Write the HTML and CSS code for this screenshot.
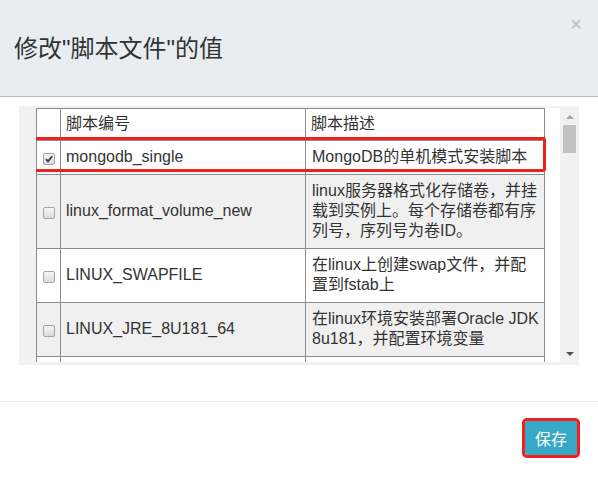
FILE: index.html
```html
<!DOCTYPE html>
<html lang="zh-CN">
<head>
<meta charset="utf-8">
<title>修改"脚本文件"的值</title>
<link rel="stylesheet" href="styles.css">
</head>
<body>
<div class="modal">
  <div class="modal-header">
    <h4 class="modal-title">修改"脚本文件"的值</h4>
    <span class="close">×</span>
  </div>
  <div class="modal-body">
    <div class="scrollbox">
      <div class="viewport">
        <div class="sheet">
          <table class="grid">
            <colgroup><col class="c-check"><col class="c-code"><col class="c-desc"></colgroup>
            <thead>
              <tr><th></th><th>脚本编号</th><th>脚本描述</th></tr>
            </thead>
            <tbody>
              <tr>
                <td class="chk"><span class="cb checked"><svg viewBox="0 0 12 12" width="12" height="12"><path d="M3 6.2 L5 8.4 L9.2 3.2" fill="none" stroke="#3a3a3a" stroke-width="1.8"/></svg></span></td>
                <td>mongodb_single</td>
                <td class="desc">MongoDB的单机模式安装脚本</td>
              </tr>
              <tr class="alt">
                <td class="chk"><span class="cb"></span></td>
                <td>linux_format_volume_new</td>
                <td class="desc">linux服务器格式化存储卷，并挂<br>载到实例上。每个存储卷都有序<br>列号，序列号为卷ID。</td>
              </tr>
              <tr>
                <td class="chk"><span class="cb"></span></td>
                <td>LINUX_SWAPFILE</td>
                <td class="desc">在linux上创建swap文件，并配<br>置到fstab上</td>
              </tr>
              <tr class="alt">
                <td class="chk"><span class="cb"></span></td>
                <td>LINUX_JRE_8U181_64</td>
                <td class="desc">在linux环境安装部署Oracle JDK<br>8u181，并配置环境变量</td>
              </tr>
              <tr>
                <td class="chk"></td>
                <td></td>
                <td class="desc">linux服务器格式化数据盘，并挂</td>
              </tr>
            </tbody>
          </table>
          <div class="mark"></div>
        </div>
      </div>
      <div class="scrollbar">
        <span class="arrow up"></span>
        <span class="thumb"></span>
        <span class="track"></span>
        <span class="arrow down"></span>
      </div>
    </div>
  </div>
  <div class="modal-footer">
    <button class="btn-save" type="button">保存</button>
  </div>
</div>
</body>
</html>
```
FILE: styles.css
```css
* { box-sizing: border-box; }
html, body {
  margin: 0;
  padding: 0;
  background: #ffffff;
}
body {
  font-family: "Liberation Sans", "Noto Sans CJK SC", sans-serif;
  color: #333333;
  width: 598px;
  height: 478px;
  overflow: hidden;
}
.modal-header {
  height: 97px;
  background: #e9edf1;
  border-bottom: 1px solid #b5babf;
  display: flex;
  justify-content: space-between;
  align-items: flex-start;
  padding: 0 16px 0 14px;
}
.modal-title {
  margin: 0;
  padding-top: 34px;
  font-size: 24px;
  line-height: 30px;
  font-weight: normal;
  color: #333333;
}
.close {
  margin-top: 14px;
  font-size: 20px;
  line-height: 20px;
  color: #b9bcbf;
}
.modal-body {
  padding: 9px 19px 0 19px;
}
.scrollbox {
  height: 259px;
  background: #f1f1f1;
  display: flex;
}
.viewport {
  flex: 1;
  padding: 2px 0 3px 17px;
  overflow: hidden;
}
.sheet {
  position: relative;
  height: 100%;
  background: #ffffff;
  overflow: hidden;
}
.grid {
  border-collapse: collapse;
  table-layout: fixed;
  width: 508px;
  font-size: 16px;
  line-height: 20px;
  color: #333333;
}
.c-check { width: 24px; }
.c-code { width: 245px; }
.c-desc { width: 239px; }
.grid th, .grid td {
  border: 1px solid #8c8c8c;
  padding: 6px 4px 7px 5px;
  text-align: left;
  vertical-align: middle;
  font-weight: normal;
}
.grid th { padding-top: 5px; padding-bottom: 6px; }
.grid td.desc { padding-left: 6px; white-space: nowrap; }
.grid tr.alt td { background: #f0f0f0; }
.grid td.chk { padding: 0; text-align: center; }
.cb {
  display: inline-block;
  width: 12px;
  height: 12px;
  border: 1px solid #a6a6a6;
  border-radius: 2px;
  background: linear-gradient(#f7f7f7, #dadada);
  vertical-align: middle;
  position: relative;
  top: 1px;
}
.cb svg {
  display: block;
  margin: -1px 0 0 -1px;
}
.mark {
  position: absolute;
  left: -3px;
  top: 29px;
  width: 513px;
  height: 35px;
  border: 3px solid #f2201b;
  border-radius: 3px;
}
.scrollbar {
  width: 19px;
  background: #f1f1f1;
  display: flex;
  flex-direction: column;
  align-items: center;
}
.arrow {
  width: 0;
  height: 0;
  border-left: 4px solid transparent;
  border-right: 4px solid transparent;
}
.arrow.up {
  margin-top: 9px;
  border-bottom: 4px solid #a3a3a3;
}
.arrow.down {
  margin-bottom: 9px;
  border-top: 4px solid #505050;
}
.thumb {
  margin-top: 6px;
  width: 13px;
  height: 28px;
  background: #c1c1c1;
}
.track { flex: 1; }
.modal-footer {
  margin-top: 36px;
  border-top: 1px solid #e5e5e5;
  padding: 19px 21px 0 0;
  display: flex;
  justify-content: flex-end;
}
.btn-save {
  height: 34px;
  width: 52px;
  padding: 0;
  border: none;
  border-radius: 2px;
  background: #37a8c5;
  color: #ffffff;
  font-family: "Liberation Sans", "Noto Sans CJK SC", sans-serif;
  font-size: 16px;
  outline: 3px solid #f2201b;
  outline-offset: 0;
}
```
